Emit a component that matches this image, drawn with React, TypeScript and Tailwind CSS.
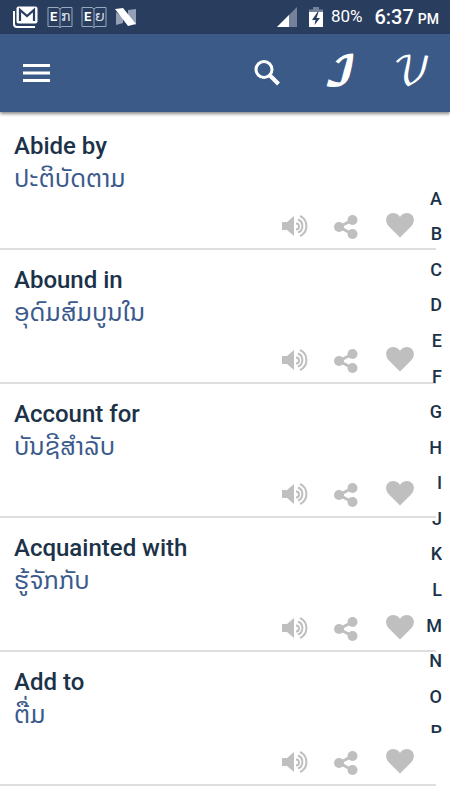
type Entry = {
  id: number;
  phrase: string;
  meaning: string;
};

const entries: Entry[] = [
  { id: 1, phrase: 'Abide by', meaning: 'ປະຕິບັດຕາມ' },
  { id: 2, phrase: 'Abound in', meaning: 'ອຸດົມສົມບູນໃນ' },
  { id: 3, phrase: 'Account for', meaning: 'ບັນຊີສຳລັບ' },
  { id: 4, phrase: 'Acquainted with', meaning: 'ຮູ້ຈັກກັບ' },
  { id: 5, phrase: 'Add to', meaning: 'ຕື່ມ' },
];

const letters = 'ABCDEFGHIJKLMNOP'.split('');

function BookIcon({ glyph }: { glyph: string }) {
  return (
    <svg viewBox="0 0 26 22" className="h-[22px] w-[26px]" aria-hidden="true">
      <path
        d="M1 1.500h10l2 1.500 2-1.500h10v19H15l-2 1-2-1H1zM13 3v18"
        fill="none"
        stroke="#9aa8bf"
        strokeWidth="1"
      />
      <text x="3" y="15" fill="#fff" fontSize="13" fontWeight="700" fontFamily="Roboto, sans-serif">
        E
      </text>
      <text x="14" y="15" fill="#d5dce6" fontSize="14" fontFamily="'DejaVu Sans', sans-serif">
        {glyph}
      </text>
    </svg>
  );
}

function StatusBar() {
  return (
    <div className="flex h-[34px] items-center justify-between bg-[#293d5f] pr-[11px] pl-[13px] text-white">
      <div className="flex items-center gap-2">
        <svg viewBox="0 0 26 22" className="h-[22px] w-[26px]" aria-hidden="true">
          <path d="M1 5v13q0 3 3 3h18" fill="none" stroke="#fff" strokeWidth="2" />
          <rect x="3.500" y="0.500" width="21" height="17" rx="2" fill="#fff" />
          <path d="M7 15V4l7 6 7-6v11" fill="none" stroke="#293d5f" strokeWidth="2.200" />
        </svg>
        <BookIcon glyph="ກ" />
        <BookIcon glyph="ຍ" />
        <svg viewBox="0 0 22 18" className="h-[18px] w-[22px]" aria-hidden="true">
          <path d="M1 4l7 6v5l-7 2zM13 2l8-1v16l-8-8z" fill="#93a0b5" />
          <path d="M0 1l8-1 13 16-8 2z" fill="#fff" />
        </svg>
      </div>
      <div className="flex items-center">
        <svg viewBox="0 0 20 20" className="h-5 w-5" aria-hidden="true">
          <path d="M20 0v20H0z" fill="#74819a" />
          <path d="M12 8v12H0z" fill="#fff" />
        </svg>
        <svg viewBox="0 0 14 20" className="mr-2 ml-3 h-5 w-[14px]" aria-hidden="true">
          <path d="M0 2.500h4V0h6v2.500h4V6H0z" fill="#74819a" />
          <path d="M0 5h14v15H0z" fill="#fff" />
          <path d="M8.500 5L3 13h3.500L5.500 18 11 11H7.500L9.500 5z" fill="#293d5f" />
        </svg>
        <span className="text-[17px]">80%</span>
        <span className="ml-3 flex items-baseline gap-1 font-medium">
          <span className="text-xl">6:37</span>
          <span className="text-sm">PM</span>
        </span>
      </div>
    </div>
  );
}

function Toolbar() {
  return (
    <header className="relative z-10 flex h-[78px] items-center justify-between bg-[#3b5a87] pr-4 pl-[22px] text-white shadow-[0_2px_3px_rgba(0,0,0,0.45)]">
      <button type="button" aria-label="Menu">
        <svg viewBox="0 0 28 20" className="h-5 w-7" aria-hidden="true">
          <path d="M1 2.500h27M1 10h27M1 17.500h27" stroke="#fff" strokeWidth="3" />
        </svg>
      </button>
      <div className="flex items-center">
        <button type="button" aria-label="Search" className="mr-9">
          <svg viewBox="0 0 28 28" className="h-7 w-7" aria-hidden="true">
            <circle cx="10" cy="10.500" r="8" fill="none" stroke="#fff" strokeWidth="3" />
            <path d="M15.500 16l9 9" stroke="#fff" strokeWidth="4" />
          </svg>
        </button>
        <button
          type="button"
          aria-label="Idioms"
          className="mr-7 w-11 text-center font-['DejaVu_Math_TeX_Gyre','DejaVu_Serif',serif] text-[40px] leading-10"
        >
          𝓘
        </button>
        <button
          type="button"
          aria-label="Verbs"
          className="w-11 text-center font-['DejaVu_Math_TeX_Gyre','DejaVu_Serif',serif] text-[40px] leading-10"
        >
          𝒱
        </button>
      </div>
    </header>
  );
}

function EntryRow({ entry }: { entry: Entry }) {
  return (
    <li className="flex h-[134px] flex-col justify-between border-b-2 border-[#dedede] pt-4 pl-[14px]">
      <div>
        <h2 className="text-2xl leading-7 font-medium text-[#1b3249]">{entry.phrase}</h2>
        <p className="font-['Noto_Sans_Lao','DejaVu_Sans',sans-serif] text-[25px] leading-9 text-[#3b5a8c]">
          {entry.meaning}
        </p>
      </div>
      <div className="flex items-center justify-end pr-[21px] pb-2">
        <button type="button" aria-label={`Listen to ${entry.phrase}`} className="mr-[23px]">
          <svg viewBox="0 0 28 28" className="h-7 w-7" aria-hidden="true">
            <path d="M0 10h5l7-6v20l-7-6H0z" fill="#bfbfbf" />
            <path
              d="M14 11.500a3 3 0 0 1 0 6M16 7.500a7 7 0 0 1 0 13M18 4a11 11 0 0 1 0 20"
              fill="none"
              stroke="#bfbfbf"
              strokeWidth="2"
            />
          </svg>
        </button>
        <button type="button" aria-label={`Share ${entry.phrase}`} className="mr-[26px]">
          <svg viewBox="0 0 26 28" className="h-7 w-[26px]" aria-hidden="true">
            <path d="M19.500 8L6 15l13.500 7" fill="none" stroke="#bfbfbf" strokeWidth="3" />
            <circle cx="19.500" cy="8" r="5" fill="#bfbfbf" />
            <circle cx="6" cy="15" r="5" fill="#bfbfbf" />
            <circle cx="19.500" cy="22" r="5" fill="#bfbfbf" />
          </svg>
        </button>
        <button type="button" aria-label={`Add ${entry.phrase} to favourites`}>
          <svg viewBox="0 0 30 28" className="h-7 w-[30px]" aria-hidden="true">
            <path
              d="M15 25.500L4 14.500C-3 7 4-2 12 2q2 1 3 3 1-2 3-3c8-4 15 5 8 12.500z"
              fill="#bfbfbf"
            />
          </svg>
        </button>
      </div>
    </li>
  );
}

function LetterIndex() {
  return (
    <nav aria-label="Alphabet" className="absolute top-[69px] right-2 h-[552px] overflow-hidden">
      <div className="grid h-[569px] auto-rows-fr text-right text-lg font-medium text-[#1b3249]">
        {letters.map((l) => (
          <a key={l} href={`#${l}`} className="flex items-center justify-end">
            {l}
          </a>
        ))}
      </div>
    </nav>
  );
}

export default function App() {
  return (
    <div className="min-h-screen bg-white font-[Roboto,sans-serif]">
      <StatusBar />
      <Toolbar />
      <main className="relative">
        <ul className="mr-[14px] pt-1">
          {entries.map((entry) => (
            <EntryRow key={entry.id} entry={entry} />
          ))}
        </ul>
        <LetterIndex />
      </main>
    </div>
  );
}
